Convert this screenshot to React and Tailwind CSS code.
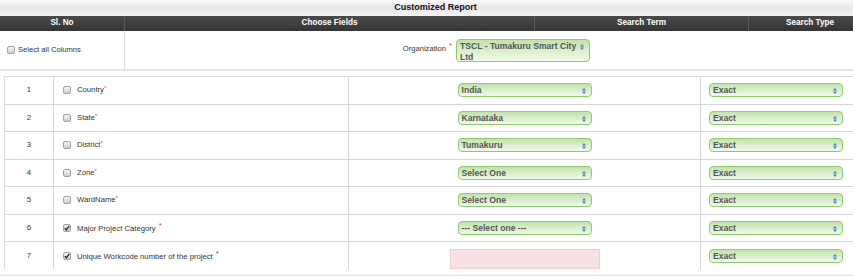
import React from 'react'

const rows = [
  { n: 1, label: 'Country', star: 'tight', value: 'India' },
  { n: 2, label: 'State', star: 'tight', value: 'Karnataka' },
  { n: 3, label: 'District', star: 'tight', value: 'Tumakuru' },
  { n: 4, label: 'Zone', star: 'tight', value: 'Select One' },
  { n: 5, label: 'WardName', star: 'tight', value: 'Select One' },
  { n: 6, label: 'Major Project Category', star: 'wide', value: '--- Select one ---', checked: true },
  { n: 7, label: 'Unique Workcode number of the project', star: 'wide', input: true, checked: true },
]

function Arrows() {
  return (
    <svg className="absolute right-[5px] top-[4px]" width="4" height="6" viewBox="0 0 4 6">
      <path d="M2 0 L4 2.4 L0 2.4 Z" fill="#4b7dc2" />
      <path d="M2 6 L4 3.6 L0 3.6 Z" fill="#4b7dc2" />
    </svg>
  )
}

function GreenSelect({ children, tall }) {
  return (
    <div
      className={`relative w-[134px] rounded-[4px] border border-[#8fca6e] bg-linear-to-b from-[#c2e3ab] to-[#f0f9ea] pl-[3px] pr-[10px] text-[8.6px] font-bold text-[#555] whitespace-nowrap ${
        tall ? 'h-[23px] leading-[10.5px] pt-[1px]' : 'h-[14px] leading-[12px]'
      }`}
    >
      {children}
      <Arrows />
    </div>
  )
}

function Check({ checked }) {
  return (
    <span className="relative inline-flex shrink-0 items-center justify-center w-[8px] h-[8px] rounded-[2px] border border-[#a0a0a0] bg-linear-to-b from-[#f6f6f6] to-[#cdcdcd]">
      {checked && (
        <svg width="6" height="6" viewBox="0 0 6 6">
          <path d="M0.8 3.2 L2.4 4.8 L5.3 0.9" stroke="#222" strokeWidth="1.3" fill="none" />
        </svg>
      )}
    </span>
  )
}

function Star({ kind }) {
  if (kind === 'tight') return <span className="text-[#e23b3b] text-[6px] align-[2px]">*</span>
  return <span className="ml-[3px] text-[#e23b3b] text-[8px] align-[3px]">*</span>
}

export default function App() {
  return (
    <div className="w-[853px] h-[276px] overflow-hidden bg-white font-['Liberation_Sans',Arial,sans-serif] text-[#333]">
      <div className="w-[871px]">
        <div className="h-[16px] flex items-center justify-center bg-linear-to-b from-[#fbfbfb] via-[#e7e7e7] to-[#f3f3f3] text-[9px] font-bold text-[#111]">
          Customized Report
        </div>
        <div className="h-[15px] grid grid-cols-[125px_410px_214px_1fr] bg-linear-to-b from-[#4a4a4a] to-[#353535] text-white text-[8.2px] font-bold">
          <div className="flex items-center justify-center border-r border-[#5a5a5a]">Sl. No</div>
          <div className="flex items-center justify-center border-r border-[#5a5a5a]">Choose Fields</div>
          <div className="flex items-center justify-center border-r border-[#5a5a5a]">Search Term</div>
          <div className="flex items-center justify-center">Search Type</div>
        </div>
        <div className="h-[40px] grid grid-cols-[125px_1fr] border-b-2 border-[#e6e6e6]">
          <div className="flex items-center gap-[3px] pl-[7px] border-r border-[#dcdcdc] text-[7.6px]">
            <Check />
            <span>Select all Columns</span>
          </div>
          <div className="flex items-start pt-[8px] pl-[265px] text-[7.6px]">
            <span className="w-[62px] text-right mt-[1px]">
              Organization<Star kind="wide" />
            </span>
            <div className="ml-[4px]">
              <GreenSelect tall>
                TSCL - Tumakuru Smart City
                <br />
                Ltd
              </GreenSelect>
            </div>
          </div>
        </div>
      </div>

      <div className="mt-[5px] ml-[4px] border-l border-t border-[#dadada] h-[193px] overflow-hidden">
        {rows.map((r, i) => (
          <div
            key={r.n}
            className={`grid grid-cols-[49px_295px_352px_1fr] h-[27.5px] ${i < rows.length - 1 ? 'border-b border-[#d6d6d6]' : ''}`}
          >
            <div className="flex items-center justify-center border-r border-[#d6d6d6] text-[7.8px] text-[#333]">{r.n}</div>
            <div className="flex items-center gap-[6px] pl-[9px] border-r border-[#d6d6d6] text-[7.7px] text-[#333]">
              <Check checked={r.checked} />
              <span>
                {r.label}
                <Star kind={r.star} />
              </span>
            </div>
            <div className="flex items-center justify-center border-r border-[#d6d6d6]">
              {r.input ? (
                <div className="w-[150px] h-[20px] mt-[6px] bg-[#f6e2e3] border border-[#ead0d0]" />
              ) : (
                <GreenSelect>{r.value}</GreenSelect>
              )}
            </div>
            <div className="flex items-center pl-[8px]">
              <GreenSelect>Exact</GreenSelect>
            </div>
          </div>
        ))}
      </div>
      <div className="mt-[6px] h-[1px] bg-[#dcdcdc]" />
    </div>
  )
}
